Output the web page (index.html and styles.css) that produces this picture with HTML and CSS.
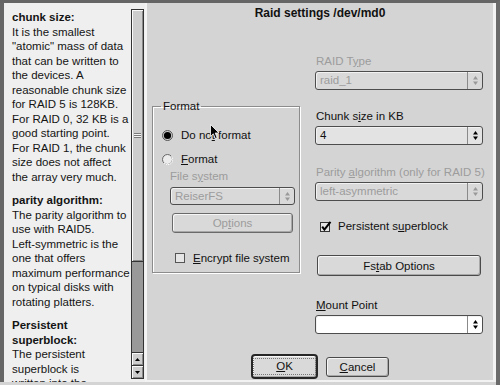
FILE: index.html
```html
<!DOCTYPE html>
<html>
<head>
<meta charset="utf-8">
<link rel="stylesheet" href="styles.css">
</head>
<body>
<div class="window">
  <aside class="help">
    <div class="help-text">
      <p><b>chunk size:</b><br>It is the smallest<br>"atomic" mass of data<br>that can be written to<br>the devices. A<br>reasonable chunk size<br>for RAID 5 is 128KB.<br>For RAID 0, 32 KB is a<br>good starting point.<br>For RAID 1, the chunk<br>size does not affect<br>the array very much.</p>
      <p><b>parity algorithm:</b><br>The parity algorithm to<br>use with RAID5.<br>Left-symmetric is the<br>one that offers<br>maximum performance<br>on typical disks with<br>rotating platters.</p>
      <p><b>Persistent<br>superblock:</b><br>The persistent<br>superblock is<br>written into the</p>
    </div>
    <div class="scrollbar">
      <div class="thumb"><span class="grip"></span></div>
      <div class="track"></div>
      <div class="arrow"><svg width="5" height="3" viewBox="0 0 5 3"><polygon points="2.5,0 5,3 0,3" fill="#000"/></svg></div>
      <div class="arrow"><svg width="5" height="3" viewBox="0 0 5 3"><polygon points="0,0 5,0 2.5,3" fill="#000"/></svg></div>
    </div>
  </aside>
  <main class="dialog">
    <h1 class="title">Raid settings /dev/md0</h1>
    <div class="content">
      <fieldset class="group">
        <legend>Format</legend>
        <div class="radio-row">
          <svg class="radio" width="11" height="11" viewBox="0 0 11 11"><circle cx="5.5" cy="5.5" r="5" fill="#cfcfcf" stroke="#555"/><circle cx="5.5" cy="5.5" r="3.6" fill="#000"/></svg>
          <span>Do no<u>t</u> format</span>
        </div>
        <div class="radio-row second">
          <svg class="radio" width="11" height="11" viewBox="0 0 11 11"><circle cx="5.5" cy="5.5" r="5" fill="#ececec" stroke="#666"/><path d="M2 9 A5 5 0 0 0 9.5 2.2" fill="none" stroke="#fff" stroke-width="1"/></svg>
          <span><u>F</u>ormat</span>
        </div>
        <div class="sub-label disabled">File s<u>y</u>stem</div>
        <div class="combo combo-fs disabled">
          <span class="combo-text">ReiserFS</span>
          <span class="combo-arrow"><svg width="5" height="9" viewBox="0 0 5 9"><polygon points="2.5,0 5,3.5 0,3.5" fill="#999"/><polygon points="0,5.5 5,5.5 2.5,9" fill="#999"/></svg></span>
        </div>
        <div class="btn btn-options disabled">Op<u>t</u>ions</div>
        <div class="check-row encrypt">
          <svg width="12" height="12" viewBox="0 0 12 12"><rect x="0.5" y="1.5" width="9" height="9" fill="#e6e6e6" stroke="#555"/></svg>
          <span><u>E</u>ncrypt file system</span>
        </div>
      </fieldset>
      <div class="right-col">
        <div class="label disabled">RAID T<u>y</u>pe</div>
        <div class="combo disabled">
          <span class="combo-text">raid_1</span>
          <span class="combo-arrow"><svg width="5" height="9" viewBox="0 0 5 9"><polygon points="2.5,0 5,3.5 0,3.5" fill="#999"/><polygon points="0,5.5 5,5.5 2.5,9" fill="#999"/></svg></span>
        </div>
        <div class="label gap">Chunk s<u>i</u>ze in KB</div>
        <div class="combo combo-chunk">
          <span class="combo-text">4</span>
          <span class="combo-arrow"><svg width="5" height="9" viewBox="0 0 5 9"><polygon points="2.5,0 5,3.5 0,3.5" fill="#000"/><polygon points="0,5.5 5,5.5 2.5,9" fill="#000"/></svg></span>
        </div>
        <div class="label gap disabled">Parity <u>a</u>lgorithm (only for RAID 5)</div>
        <div class="combo disabled">
          <span class="combo-text">left-asymmetric</span>
          <span class="combo-arrow"><svg width="5" height="9" viewBox="0 0 5 9"><polygon points="2.5,0 5,3.5 0,3.5" fill="#999"/><polygon points="0,5.5 5,5.5 2.5,9" fill="#999"/></svg></span>
        </div>
        <div class="check-row persistent">
          <svg width="12" height="12" viewBox="0 0 12 12"><rect x="0.5" y="1.5" width="9" height="9" fill="#e6e6e6" stroke="#333"/><path d="M2.2 5.6 L4.4 8.6 L10.5 0.8" fill="none" stroke="#000" stroke-width="2"/></svg>
          <span>Persistent s<u>u</u>perblock</span>
        </div>
        <div class="btn btn-fstab">Fs<u>t</u>ab Options</div>
        <div class="label mount"><u>M</u>ount Point</div>
        <div class="combo combo-mount">
          <span class="combo-text"></span>
          <span class="combo-arrow"><svg width="5" height="9" viewBox="0 0 5 9"><polygon points="2.5,0 5,3.5 0,3.5" fill="#000"/><polygon points="0,5.5 5,5.5 2.5,9" fill="#000"/></svg></span>
        </div>
      </div>
    </div>
    <div class="buttons">
      <div class="btn btn-ok"><span class="focus"><u>O</u>K</span></div>
      <div class="btn btn-cancel"><u>C</u>ancel</div>
    </div>
  </main>
  <svg class="cursor" width="10" height="16" viewBox="0 0 10 16"><path d="M0.5 0.5 L0.5 12.5 L3.3 9.8 L5.3 14.5 L7.2 13.7 L5.2 9 L9 9 Z" fill="#000" stroke="#fff" stroke-width="0.8"/></svg>
</div>
</body>
</html>
```
FILE: styles.css
```css
body {
  margin: 0;
  font-family: "Liberation Sans", Arial, sans-serif;
  font-size: 11.5px;
  color: #111;
  background: #d4d4d4;
}

.window {
  position: relative;
  width: 500px;
  height: 385px;
  box-sizing: border-box;
  display: flex;
  border-top: 3px solid #656565;
  border-right: 4px solid #6a6a6a;
  padding-bottom: 3px;
  background: #d4d4d4;
  overflow: hidden;
}

/* help panel */
.help {
  width: 145px;
  flex: none;
  box-sizing: border-box;
  border-left: 4px solid #666;
  background: #efefef;
  display: flex;
}

.help-text {
  flex: 1;
  padding: 7px 0 0 8px;
  line-height: 14.5px;
  white-space: nowrap;
  overflow: hidden;
  color: #141414;
}

.help-text p {
  margin: 0 0 9px;
}

.scrollbar {
  width: 13px;
  flex: none;
  box-sizing: border-box;
  margin: 6px 1px 3px 0;
  border: 1px solid #333;
  display: flex;
  flex-direction: column;
}

.thumb {
  height: 252px;
  flex: none;
  box-sizing: border-box;
  background: #cdcdcd;
  border-bottom: 1px solid #333;
  box-shadow: inset 1px 1px 0 #fafafa, inset -1px -1px 0 #8a8a8a;
  display: flex;
  align-items: center;
  justify-content: center;
}

.grip {
  width: 7px;
  height: 5px;
  background: repeating-linear-gradient(to bottom, #7a7a7a 0 1px, #f5f5f5 1px 2px);
}

.track {
  flex: 1;
  background: #999;
}

.arrow {
  height: 13px;
  flex: none;
  box-sizing: border-box;
  border-top: 1px solid #333;
  background: #cdcdcd;
  box-shadow: inset 1px 1px 0 #fafafa, inset -1px -1px 0 #8a8a8a;
  display: flex;
  align-items: center;
  justify-content: center;
}

/* dialog */
.dialog {
  flex: 1;
  box-sizing: border-box;
  border-left: 2px solid #f4f4f4;
  border-right: 3px solid #f2f2f2;
  border-bottom: 2px solid #f2f2f2;
  display: flex;
  flex-direction: column;
}

.title {
  margin: 0;
  padding-top: 2px;
  font-size: 12px;
  font-weight: bold;
  line-height: 16px;
  text-align: center;
  color: #111;
}

.content {
  display: flex;
  align-items: flex-start;
  padding-left: 5px;
  gap: 15px;
}

.disabled {
  color: #9c9c9c;
}

/* format group */
.group {
  width: 148px;
  min-width: 0;
  box-sizing: border-box;
  margin: 79px 0 0 0;
  padding: 15px 0 7px 9px;
  border: 1px solid #8c8c8c;
  box-shadow: inset 1px 1px 0 #fff, 1px 1px 0 #fff;
}

.group legend {
  padding: 0 2px;
  margin-left: -1px;
  line-height: 13px;
}

.radio-row {
  display: flex;
  align-items: center;
  height: 14px;
  line-height: 14px;
}

.radio-row.second {
  margin-top: 10px;
}

.radio {
  margin-right: 8px;
  flex: none;
}

.sub-label {
  margin: 4px 0 0 8px;
  line-height: 13px;
}

.combo {
  display: flex;
  height: 19px;
  box-sizing: border-box;
  border: 1px solid #4d4d4d;
  border-radius: 3px;
  background: #d9d9d9;
  box-shadow: inset 1px 1px 0 #f2f2f2;
}

.combo-fs {
  width: 125px;
  height: 18px;
  margin: 4px 0 0 8px;
}

.combo-chunk {
  background: #e3e3e3;
}

.combo-mount {
  background: #fff;
}

.combo-text {
  flex: 1;
  padding-left: 4px;
  line-height: 17px;
  white-space: nowrap;
  overflow: hidden;
}

.combo-fs .combo-text {
  line-height: 16px;
}

.combo-arrow {
  width: 14px;
  flex: none;
  border-left: 1px solid #8a8a8a;
  display: flex;
  align-items: center;
  justify-content: center;
}

.btn {
  box-sizing: border-box;
  border: 1px solid #4a4a4a;
  border-radius: 3px;
  background: #d9d9d9;
  box-shadow: inset 1px 1px 0 #f6f6f6, inset -1px -1px 0 #a8a8a8;
  display: flex;
  align-items: center;
  justify-content: center;
  white-space: nowrap;
}

.btn-options {
  width: 121px;
  height: 20px;
  margin: 8px 0 0 10px;
  border-color: #6a6a6a;
}

.check-row {
  display: flex;
  align-items: center;
  line-height: 13px;
  gap: 6px;
}

.check-row svg {
  flex: none;
}

.encrypt {
  height: 14px;
  margin: 18px 0 0 13px;
}

/* right column */
.right-col {
  width: 168px;
  margin-top: 34px;
  display: flex;
  flex-direction: column;
}

.label {
  line-height: 13px;
  padding-left: 1px;
  margin-bottom: 3px;
  white-space: nowrap;
}

.label.gap {
  margin-top: 20px;
}

.label.gap.disabled {
  margin-top: 21px;
}

.persistent {
  height: 13px;
  margin: 19px 0 0 5px;
}

.btn-fstab {
  height: 21px;
  margin: 22px 2px 0 2px;
}

.label.mount {
  margin-top: 23px;
}

/* bottom buttons */
.buttons {
  display: flex;
  justify-content: center;
  align-items: center;
  gap: 8px;
  margin-top: 20px;
}

.btn-ok {
  width: 67px;
  height: 25px;
  border: 2px solid #262626;
  border-radius: 4px;
}

.focus {
  border: 1px dotted #777;
  padding: 1px 22px 1px 22px;
  line-height: 13px;
}

.btn-cancel {
  width: 63px;
  height: 20px;
}

.cursor {
  position: absolute;
  left: 210px;
  top: 121px;
}
```
